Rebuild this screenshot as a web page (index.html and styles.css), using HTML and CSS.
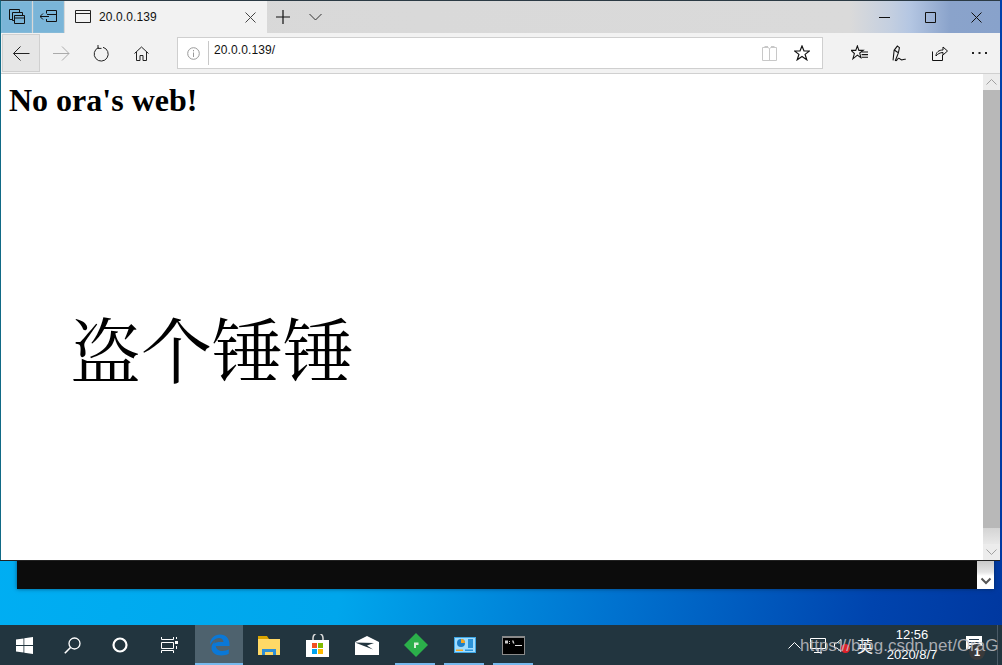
FILE: index.html
```html
<!DOCTYPE html>
<html lang="zh">
<head>
<meta charset="utf-8">
<title>20.0.0.139</title>
<link rel="stylesheet" href="styles.css">
</head>
<body>
<div class="desktop">
  <div class="terminal">
    <div class="term-scroll">
      <svg class="term-arrow" width="12" height="8" viewBox="0 0 12 8"><path d="M1.500 1.500 6 6l4.500-4.500" fill="none" stroke="#555" stroke-width="2"/></svg>
    </div>
  </div>
  <div class="browser">
    <div class="tabbar">
      <div class="tab-btn"><svg width="16" height="16" viewBox="0 0 16 16"><path d="M.5 .5h10v3M.5 .5v10h3M3.500 3.500h10v3M3.500 3.500v8h2M5.500 6.500h10v8h-10zM5.500 9h10" fill="none" stroke="#111" stroke-width="1"/></svg></div>
      <div class="tab-btn"><svg width="17" height="14" viewBox="0 0 17 14"><path d="M6.500 3.500V.5h10v11h-10V9M0 6.500h9M3 3.500 0 6.500l3 3M7 4.500h9" fill="none" stroke="#111"/></svg></div>
      <div class="tab">
        <svg width="17" height="14" viewBox="0 0 17 14"><path d="M.5 .5h15v12H.5zM.5 3.500h15" fill="none" stroke="#222"/></svg>
        <span class="tab-title">20.0.0.139</span>
        <svg class="tab-close" width="11" height="11" viewBox="0 0 11 11"><path d="M.5 .5l10 10M10.500 .5l-10 10" stroke="#444"/></svg>
      </div>
      <div class="tab-new"><svg width="14" height="14" viewBox="0 0 14 14"><path d="M7 0v14M0 7h14" stroke="#111" stroke-width="1.200"/></svg></div>
      <div class="tab-list"><svg width="13" height="8" viewBox="0 0 13 8"><path d="M.5 1 6.500 7l6-6" fill="none" stroke="#333"/></svg></div>
      <div class="win-controls">
        <svg width="11" height="3" viewBox="0 0 11 3"><path d="M0 1.500h11" stroke="#111"/></svg>
        <svg width="11" height="11" viewBox="0 0 11 11"><path d="M.5 .5h10v10H.5z" fill="none" stroke="#111"/></svg>
        <svg width="11" height="11" viewBox="0 0 11 11"><path d="M.5 .5l10 10M10.500 .5l-10 10" stroke="#111"/></svg>
      </div>
    </div>
    <div class="toolbar">
      <div class="nav-btn nav-active"><svg width="17" height="15" viewBox="0 0 17 15"><path d="M.5 7.500h16M7.500 .5l-7 7 7 7" fill="none" stroke="#222"/></svg></div>
      <div class="nav-btn"><svg width="17" height="15" viewBox="0 0 17 15"><path d="M0 7.500h16M9 .5l7 7-7 7" fill="none" stroke="#aaa"/></svg></div>
      <div class="nav-btn"><svg width="16" height="17" viewBox="0 0 16 17"><path d="M5.500 2.600A7 7 0 1 0 10 2.300M5 0v3.400h3.500" fill="none" stroke="#222"/></svg></div>
      <div class="nav-btn"><svg width="15" height="15" viewBox="0 0 15 15"><path d="M.5 7.500 7.500 1l7 6.500M2.500 6v8.500h3.500v-5h3v5h3.500V6" fill="none" stroke="#222"/></svg></div>
      <div class="address">
        <svg class="info" width="13" height="13" viewBox="0 0 13 13"><circle cx="6.500" cy="6.500" r="5.800" fill="none" stroke="#999"/><path d="M6.500 5.500V10M6.500 3v1.300" stroke="#999"/></svg>
        <span class="url">20.0.0.139/</span>
        <svg class="reader" width="15" height="15" viewBox="0 0 15 15"><path d="M.5 1.500h5.500l1.500 1 1.500-1h5.500v13H.5zM7.500 2.500v12M2.500 .5h3.500M9 .5h3.500" fill="none" stroke="#c8c8c8"/></svg>
        <svg class="fav" width="16" height="16" viewBox="0 0 16 16"><path d="M8 1l2 5h5.500l-4.400 3.400 1.700 5.400L8 11.500l-4.800 3.300 1.700-5.400L.5 6H6z" fill="none" stroke="#111" stroke-width="1.200"/></svg>
      </div>
      <div class="tools">
        <svg width="17" height="16" viewBox="0 0 16 15"><path d="M6 .8 7.400 5H11.500L8.200 7.500 9.300 12 6 9.500 1.800 13l1.400-5L0 5h4.500z" fill="none" stroke="#111"/><path d="M10 6.500h6M10 9h6M10 11.500h6" stroke="#111"/></svg>
        <svg width="17" height="17" viewBox="0 0 16 16"><path d="M1 14.500 2 5l3-4 2 1.500-1 5L3 15M2.500 5l3 2M4 15c3-5 3-1 5-1s2-1 4-.5" fill="none" stroke="#111"/></svg>
        <svg width="16" height="15" viewBox="0 0 16 15"><path d="M.5 5.500v9h10V9M4 10c0-4 3-6 7-6V1l4.500 4-4.500 4V6.500C8 6.500 5.500 8 4 10z" fill="none" stroke="#111"/></svg>
        <svg width="15" height="3" viewBox="0 0 15 3"><path d="M0 0h2v2H0zM6.500 0h2v2h-2zM13 0h2v2h-2z" fill="#222"/></svg>
      </div>
    </div>
    <div class="viewport">
      <div class="page">
        <h1 class="heading">No ora's web!</h1>
        <p class="big">盗个锤锤</p>
      </div>
      <div class="scrollbar">
        <div class="sb-btn"><svg width="11" height="6" viewBox="0 0 11 6"><path d="M.5 5.500l5-5 5 5" fill="none" stroke="#a0a0a0"/></svg></div>
        <div class="sb-thumb"></div>
        <div class="sb-track"></div>
        <div class="sb-btn"><svg width="11" height="6" viewBox="0 0 11 6"><path d="M.5 .5l5 5 5-5" fill="none" stroke="#a0a0a0"/></svg></div>
      </div>
    </div>
  </div>
</div>
<div class="taskbar">
  <div class="tb-system">
    <div class="tb-item"><svg width="17" height="17" viewBox="0 0 17 17"><path d="M0 2.500 7.500 1.400V8H0zM8.300 1.300 17 0v8H8.300zM0 9h7.500v6.600L0 14.500zM8.300 9H17v8L8.300 15.700z" fill="#fff"/></svg></div>
    <div class="tb-item"><svg width="17" height="17" viewBox="0 0 17 17"><circle cx="10.500" cy="6.500" r="5.500" fill="none" stroke="#fff" stroke-width="1.300"/><path d="M6.500 10.500 .8 16.200" stroke="#fff" stroke-width="1.600"/></svg></div>
    <div class="tb-item"><svg width="16" height="16" viewBox="0 0 16 16"><circle cx="8" cy="8" r="6.500" fill="none" stroke="#fff" stroke-width="2.200"/></svg></div>
    <div class="tb-item tb-wide"><svg width="17" height="16" viewBox="0 0 17 16"><path d="M.5 5.500h12v6H.5zM.5 0v2.500h12V0M.5 16v-2.500h12V16" fill="none" stroke="#fff"/><path d="M14 4h3v3h-3z" fill="#fff"/><path d="M15.500 0v2M15.500 9v3" stroke="#fff"/></svg></div>
  </div>
  <div class="tb-apps">
    <div class="app app-current"><svg width="21" height="22" viewBox="0 0 21 22"><path d="M1 11C1 4 5.500 .5 11 .5c6 0 9.500 4 9.500 10v1.500H6.800c.3 3.500 3.300 5 6.500 5 2.500 0 5-.7 6.500-1.700v4.500c-2 1-4.500 1.700-7.500 1.700C6 21.500 2.500 18 2.500 14c0-3 1.500-5.500 4-7C5 9 4.500 10 4.500 10c1.500-1.500 4-2 7-2h3C14.300 5.500 12.500 4 10 4 6.500 4 3 7 1 11z" fill="#0a78d7"/></svg></div>
    <div class="app"><svg width="22" height="19" viewBox="0 0 22 19"><path d="M0 0h9l2 3h11v16H0z" fill="#d9a400"/><path d="M0 3h22v16H0z" fill="#ffd966"/><path d="M4 19v-6h14v6h-3v-3H7v3z" fill="#2f8fd6"/></svg></div>
    <div class="app"><svg width="24" height="23" viewBox="0 0 24 23"><path d="M7 6V4a5 5 0 0 1 10 0v2" fill="none" stroke="#ddd" stroke-width="1.500"/><path d="M0 6h23v17H0z" fill="#fff"/><path d="M6 9h5v5H6z" fill="#f25022"/><path d="M12 9h5v5h-5z" fill="#7fba00"/><path d="M6 15h5v5H6z" fill="#00a4ef"/><path d="M12 15h5v5h-5z" fill="#ffb900"/></svg></div>
    <div class="app"><svg width="24" height="19" viewBox="0 0 24 19"><path d="M0 6 12 0l12 6v13H0z" fill="#fff"/><path d="M0 6.500 19 7l-7 2.500 6 4z" fill="#22353f"/></svg></div>
    <div class="app app-running"><svg width="24" height="24" viewBox="0 0 24 24"><path d="M12 0l12 12-12 12L0 12z" fill="#2bb04a"/><path d="M10 9.500h4.500v2.500h-2.500v3h-2z" fill="#d8efd8"/></svg></div>
    <div class="app app-running"><svg width="22" height="16" viewBox="0 0 22 16"><path d="M0 0h22v16H0z" fill="#3da7e6"/><path d="M1 1h20v14H1z" fill="#9fdcff"/><circle cx="7" cy="6" r="4" fill="#1e7fc8"/><path d="M7 6V2a4 4 0 0 1 4 4z" fill="#f5a623"/><path d="M14 2h5v9h-5z" fill="#2c93d8"/><path d="M2 12.500h7v1.500H2z" fill="#f5a623"/><path d="M11 12.500h8v1.500h-8z" fill="#2c93d8"/></svg></div>
    <div class="app app-running"><svg width="23" height="19" viewBox="0 0 23 19"><path d="M0 0h23v19H0z" fill="#8a8a8a"/><path d="M1 2h21v16H1z" fill="#000"/><path d="M3 4.500h3v3H3zM7 5h1v1H7zM7 7h1v1H7zM10 4.500h1.500l1 3H11z" fill="#ccc"/><path d="M13 9h7v1h-7z" fill="#ddd"/></svg></div>
  </div>
  <div class="tray">
    <svg class="tray-up" width="13" height="7" viewBox="0 0 13 7"><path d="M.5 6.500l6-6 6 6" fill="none" stroke="#fff"/></svg>
    <svg class="tray-net" width="16" height="15" viewBox="0 0 16 15"><path d="M.5 .5h15v10H.5zM8 10.500V15M4 14.500h8" fill="none" stroke="#fff"/></svg>
    <span class="speaker"><svg width="8" height="13" viewBox="0 0 8 13"><path d="M.5 4h2.500l4-3.500v12L3 9H.5z" fill="none" stroke="#fff"/></svg><span class="mute"></span></span>
    <span class="ime">英</span>
    <div class="clock"><span>12:56</span><span>2020/8/7</span></div>
    <div class="notify"><svg width="16" height="13" viewBox="0 0 16 13"><path d="M0 0h16v13H0z" fill="#fff"/><path d="M3 3.500h10M3 6.500h10M3 9.500h7" stroke="#26394a"/></svg><span class="badge">1</span></div>
  </div>
  <span class="watermark">https://blog.csdn.net/OraG</span>
</div>
</body>
</html>
```

FILE: styles.css
```css
* { box-sizing: border-box; }
html, body { margin: 0; padding: 0; }
body {
  width: 1002px;
  height: 665px;
  overflow: hidden;
  display: flex;
  flex-direction: column;
  font-family: "Liberation Sans", "Noto Sans", sans-serif;
}
svg { display: block; flex: none; }

.desktop {
  position: relative;
  height: 625px;
  background: linear-gradient(100deg, #00b0f4 0%, #00a6ec 40%, #0072cf 65%, #0044ae 88%, #0038a0 100%);
}
.terminal {
  position: absolute;
  left: 17px;
  top: 500px;
  width: 977px;
  height: 89px;
  background: #0c0c0c;
  box-shadow: 0 0 4px rgba(0, 30, 60, .6);
  display: flex;
  justify-content: flex-end;
}
.term-scroll {
  width: 17px;
  height: 100%;
  background: linear-gradient(#c6c6c6 60px, #e4e4e4 72px, #fff 76px);
  display: flex;
  flex-direction: column;
  justify-content: flex-end;
  align-items: center;
}
.term-arrow { margin-bottom: 4px; }

.browser {
  position: absolute;
  left: 0;
  top: 0;
  width: 1000px;
  height: 560px;
  background: #fff;
  border-top: 1px solid #2b3a44;
  border-left: 1px solid #116a86;
  display: flex;
  flex-direction: column;
  box-shadow: 0 1px 0 #222;
}
.tabbar {
  height: 32px;
  display: flex;
  align-items: stretch;
  background: linear-gradient(90deg, #d8d8d8 0%, #dadada 85%, #c4cfe0 89%, #b4c6e2 91%, #8aa3cb 95%, #88a2cb 100%);
}
.tab-btn {
  width: 31px;
  margin-right: 1px;
  background: #7ab5d8;
  border: 1px solid #86bad8;
  display: flex;
  align-items: center;
  justify-content: center;
}
.tab {
  width: 202px;
  background: #f2f2f2;
  display: flex;
  align-items: center;
  padding: 0 11px 0 10px;
  font-size: 12px;
  color: #111;
}
.tab-title { margin-left: 7px; flex: 1; letter-spacing: .1px; }
.tab-new { width: 32px; display: flex; align-items: center; justify-content: center; }
.tab-list { width: 32px; display: flex; align-items: center; justify-content: center; }
.win-controls {
  margin-left: auto;
  width: 140px;
  display: flex;
  align-items: center;
  justify-content: space-between;
  padding: 0 18px 0 19px;
}
.toolbar {
  height: 41px;
  flex: none;
  background: #f2f2f2;
  border-bottom: 1px solid #d0d0d0;
  display: flex;
  align-items: center;
  padding-left: 1px;
}
.nav-btn {
  width: 38px;
  height: 38px;
  margin-right: 2px;
  border: 1px solid transparent;
  display: flex;
  align-items: center;
  justify-content: center;
}
.nav-active { background: #e6e6e6; border-color: #d0d0d0; }
.address {
  width: 646px;
  height: 32px;
  margin-left: 15px;
  background: #fff;
  border: 1px solid #cfcfcf;
  display: flex;
  align-items: center;
}
.info { margin-left: 9px; margin-right: 8px; }
.url {
  flex: 1;
  height: 24px;
  border-left: 1px solid #c8c8c8;
  padding-left: 5px;
  font-size: 12px;
  line-height: 18px;
  letter-spacing: .1px;
  color: #111;
}
.reader { margin-right: 17px; }
.fav { margin-right: 12px; }
.tools {
  display: flex;
  align-items: center;
  flex: 1;
  justify-content: space-between;
  padding: 0 13px 0 28px;
}
.viewport { flex: 1; display: flex; min-height: 0; background: #fff; }
.page { flex: 1; color: #000; font-family: "Liberation Serif", "Noto Serif CJK SC", "Noto Sans CJK SC", serif; padding: 8px; }
.heading { margin: 0; font-size: 32px; line-height: 37px; font-weight: 700; }
.big { margin: 184px 0 0 61px; font-size: 71px; line-height: 100px; }
.scrollbar { width: 17px; display: flex; flex-direction: column; background: #e8e8e8; }
.sb-btn { height: 16px; background: #ececec; display: flex; align-items: center; justify-content: center; flex: none; }
.sb-thumb { height: 438px; background: #b8b8b8; }
.sb-track { flex: 1; background: linear-gradient(#d4d4d4, #e8e8e8); }

.taskbar {
  position: relative;
  height: 40px;
  flex: none;
  background: #22353f;
  display: flex;
  align-items: stretch;
  color: #fff;
}
.tb-system { display: flex; width: 195px; }
.tb-item { width: 48px; display: flex; align-items: center; justify-content: center; }
.tb-wide { width: 51px; }
.tb-apps { display: flex; }
.app {
  width: 49px;
  position: relative;
  display: flex;
  align-items: center;
  justify-content: center;
}
.app-running::after,
.app-current::after {
  content: "";
  position: absolute;
  left: 4px;
  right: 5px;
  bottom: 0;
  height: 2px;
  background: #76b9ed;
}
.app-current { background: #4e626e; width: 48px; margin-right: 1px; }
.app-current::after { left: 0; right: 0; }
.tray {
  margin-left: auto;
  width: 214px;
  display: flex;
  align-items: center;
  flex: none;
}
.tray-up { margin-right: 9px; }
.speaker { position: relative; margin-left: 8px; display: block; }
.mute {
  position: absolute;
  left: 7px;
  top: 5px;
  width: 9px;
  height: 9px;
  border-radius: 50%;
  background: #e0222c;
}
.ime { margin-left: 15px; width: 16px; font: 16px/20px "Noto Sans CJK SC", sans-serif; }
.clock {
  width: 78px;
  flex: none;
  display: flex;
  flex-direction: column;
  align-items: center;
  font-size: 13px;
  line-height: 20px;
}
.notify {
  position: relative;
  width: 47px;
  height: 100%;
  flex: none;
  display: flex;
  align-items: center;
  justify-content: center;
  border-right: 1px solid #4a5a66;
}
.notify svg { margin-top: -6px; margin-right: 1px; }
.badge {
  position: absolute;
  left: 18px;
  top: 19px;
  width: 16px;
  height: 16px;
  border-radius: 50%;
  background: #3a3a3a;
  font-size: 11px;
  font-weight: 700;
  line-height: 16px;
  text-align: center;
}
.watermark {
  position: absolute;
  left: 800px;
  top: 10px;
  font-size: 17px;
  line-height: 22px;
  color: rgba(195, 195, 200, .85);
  white-space: nowrap;
}
```
